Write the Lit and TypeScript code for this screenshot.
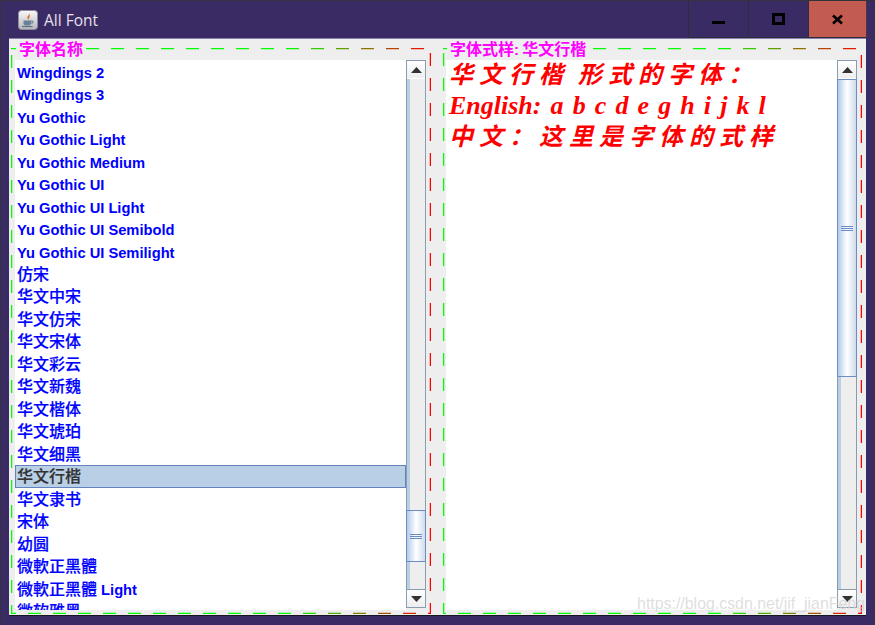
import { LitElement, html, css, svg } from "lit";
import { customElement } from "lit/decorators.js";

const FONTS = [
  "Wingdings 2", "Wingdings 3", "Yu Gothic", "Yu Gothic Light", "Yu Gothic Medium", "Yu Gothic UI",
  "Yu Gothic UI Light", "Yu Gothic UI Semibold", "Yu Gothic UI Semilight", "仿宋", "华文中宋", "华文仿宋",
  "华文宋体", "华文彩云", "华文新魏", "华文楷体", "华文琥珀", "华文细黑", "华文行楷", "华文隶书", "宋体", "幼圆",
  "微軟正黑體", "微軟正黑體 Light", "微软雅黑",
];
const SELECTED = "华文行楷";

function runs(text: string) {
  return text.split(/([\u3000-\u9fff\uff00-\uffef]+)/).filter(Boolean).map((part) =>
    /[\u3000-\u9fff\uff00-\uffef]/.test(part) ? html`<span class="cjk">${part}</span>` : html`<span class="lat">${part}</span>`
  );
}

function gradientColor(t: number) {
  const k = Math.max(0, (t - 0.66) / 0.34);
  return `rgb(${Math.round(255 * k)},${Math.round(255 * (1 - k))},0)`;
}

function starts(phase: number, end: number) {
  const out: number[] = [];
  for (let p = phase - 25; p < end; p += 25) out.push(p);
  return out;
}

interface Phases { top: number; right: number; bottom: number; left: number; }

function border(w: number, h: number, ph: Phases) {
  const parts = [];
  const rect = (x: number, y: number, rw: number, rh: number, fill: string, o = 1) =>
    svg`<rect x=${x} y=${y} width=${rw} height=${rh} fill=${fill} opacity=${o}></rect>`;
  for (const s of starts(ph.top, w)) {
    const a = Math.max(0, s), b = Math.min(w, s + 13);
    if (b <= a) continue;
    const c = gradientColor((a + b) / 2 / w);
    parts.push(rect(a, 0, b - a, 1, c), rect(a, 1, b - a, 1, c, 0.25));
  }
  for (const s of starts(ph.bottom, w)) {
    const a = Math.max(0, s), b = Math.min(w, s + 13);
    if (b <= a) continue;
    const c = gradientColor((a + b) / 2 / w);
    parts.push(rect(a, h - 1, b - a, 1, c), rect(a, h - 2, b - a, 1, c, 0.25));
  }
  for (const s of starts(ph.left, h)) {
    const a = Math.max(0, s), b = Math.min(h, s + 13);
    if (b <= a) continue;
    parts.push(rect(0, a, 1, b - a, "#00ff00"), rect(1, a, 1, b - a, "#00ff00", 0.25));
  }
  for (const s of starts(ph.right, h)) {
    const a = Math.max(0, s), b = Math.min(h, s + 13);
    if (b <= a) continue;
    parts.push(rect(w - 1, a, 1, b - a, "#ff0000"), rect(w - 2, a, 1, b - a, "#ff0000", 0.25));
  }
  return html`<svg class="dash" width=${w} height=${h} viewBox="0 0 ${w} ${h}" shape-rendering="crispEdges">${parts}</svg>`;
}

function scrollbar(before: number, thumb: number) {
  return html`<div class="sb">
    <div class="btn"><svg width="11" height="6" viewBox="0 0 11 6"><path d="M5.5 0L11 6H0Z" fill="#333"></path></svg></div>
    <div class="track">
      <div class="strip" style="height:${before}px"></div>
      <div class="thumb" style="height:${thumb}px"><i></i><i></i><i></i></div>
      <div class="strip rest"></div>
    </div>
    <div class="btn down"><svg width="11" height="6" viewBox="0 0 11 6"><path d="M0 0H11L5.5 6Z" fill="#333"></path></svg></div>
  </div>`;
}

@customElement("app-root")
export class AppRoot extends LitElement {
  static styles = css`
    :host { display: block; width: 875px; height: 625px; background: #3b2b65; box-sizing: border-box; border: 1px solid #35323f; border-bottom: 0; overflow: hidden; position: relative; }
    .title { display: flex; align-items: stretch; height: 37px; padding-right: 7px; }
    .name { flex: 1; display: flex; align-items: center; gap: 6px; padding-left: 17px; color: #e6e0ea; font: 15.5px "Open Sans", sans-serif; }
    .wb { width: 60px; flex: none; border-left: 1px solid #2f2d3c; border-bottom: 1px solid #2f2d3c; display: flex; align-items: center; justify-content: center; box-sizing: border-box; }
    .wb.close { width: 59px; background: #c25b50; border-right: 1px solid #4a3540; }
    .min-icon { margin-top: 6px; }
    .main { width: 857px; height: 578px; margin-left: 8px; box-sizing: border-box; background: #eeeeee; border-top: 1px solid #8782ad; border-bottom: 1px solid #17151f; padding: 9px 4px 2px 2px; display: flex; gap: 12px; }
    .panel { position: relative; height: 565px; box-sizing: border-box; display: flex; flex-direction: column; }
    .left { width: 420px; padding: 12px 5px 3px 4px; }
    .right { width: 419px; padding: 12px 5px 3px 3px; }
    .dash { position: absolute; left: 0; top: 0; }
    .legend { position: absolute; top: -9px; background: #eeeeee; height: 18px; padding: 0 3px; color: #ff00ff; font: bold 15px/18px "Liberation Sans", sans-serif; white-space: nowrap; }
    .legend .cjk { font: 700 16px/18px "Noto Sans CJK SC", sans-serif; }
    .left .legend { left: 5px; }
    .right .legend { left: 4px; word-spacing: -1px; }
    .body { flex: 1; display: flex; min-height: 0; position: relative; }
    .list { flex: 1; background: #fff; overflow: hidden; min-width: 0; }
    .row { height: 22.5px; box-sizing: border-box; padding: 0 2px; display: flex; align-items: center; color: #0000ff; white-space: pre; font: bold 14.7px "Liberation Sans", sans-serif; }
    .row .lat { margin-top: 3px; }
    .row .cjk { font: 500 16px/20px "Noto Sans CJK SC", sans-serif; margin-top: -2px; -webkit-text-stroke: 0.2px currentColor; }
    .row.sel { padding: 0 1px; color: #333; background: #b8cfe5; border: 1px solid #6382bf; }
    .sample { flex: 1; background: #fff; padding: 0 0 0 3px; color: #ff0000; min-width: 0; }
    .line { height: 31px; display: flex; align-items: center; white-space: pre; }
    .line .cjk { font: italic 700 24px/26px "Noto Sans CJK SC", sans-serif; letter-spacing: 6px; margin-top: -6px; }
    .line .lat { font: italic 700 26px/28px "Liberation Serif", serif; word-spacing: 2.6px; margin-top: -1px; }
    .sb { width: 20px; height: 548px; display: flex; flex-direction: column; flex: none; box-sizing: border-box; border-left: 1px solid #8a9cb0; border-right: 1px solid #8a9cb0; }
    .btn { height: 19px; flex: none; box-sizing: border-box; background: linear-gradient(#ffffff, #eeeeee); border-top: 1px solid #8a9cb0; border-bottom: 1px solid #ffffff; display: flex; align-items: center; justify-content: center; }
    .btn.down { border-top: 1px solid #8a9cb0; border-bottom: 1px solid #8a9cb0; }
    .track { flex: 1; display: flex; flex-direction: column; min-height: 0; }
    .strip { flex: none; background: linear-gradient(90deg, #b8cfe5 0, #b8cfe5 3px, #eeeeee 3px); }
    .strip.rest { flex: 1; }
    .thumb { flex: none; box-sizing: border-box; border: 1px solid #6d8cc6; background: linear-gradient(90deg, #b3cae8, #e8f0fa 35%, #ffffff 50%, #cfdcec); display: flex; flex-direction: column; align-items: center; justify-content: center; gap: 1px; margin: 0 -1px; }
    .thumb i { display: block; width: 12px; height: 1px; background: #6d8cc6; }
    .mark { position: absolute; right: 9px; bottom: 12px; color: rgba(195, 195, 195, 0.55); font: 15.9px "Liberation Sans", sans-serif; white-space: nowrap; text-shadow: 0 0 1px rgba(255, 255, 255, 0.5); }
  `;

  render() {
    return html`
      <div class="title">
        <div class="name">
          <svg width="20" height="20" viewBox="0 0 20 20">
            <defs><linearGradient id="ic" x1="0" y1="0" x2="0" y2="1"><stop offset="0" stop-color="#fafafa"></stop><stop offset="1" stop-color="#b5b5bd"></stop></linearGradient></defs>
            <rect x="0.5" y="0.5" width="19" height="19" rx="3" fill="url(#ic)" stroke="#8d8d9a"></rect>
            <path d="M10.5 2.5C12.5 5 8.5 6 9.5 8.5C10 9.5 11 9.5 11 9.5C10.2 8 13.5 6.5 10.5 2.5Z" fill="#d8702a"></path>
            <path d="M5.5 10.5H13V13.5C13 15 11.5 15.5 9.2 15.5C7 15.5 5.5 15 5.5 13.5Z" fill="#6d8196"></path>
            <path d="M13 11H15V13H13" fill="none" stroke="#6d8196"></path>
            <path d="M4 16.5H14.5" stroke="#5b6f85" stroke-width="1.2"></path>
          </svg>
          <span>All Font</span>
        </div>
        <div class="wb"><svg class="min-icon" width="13" height="3" viewBox="0 0 13 3"><rect width="13" height="3" fill="#000"></rect></svg></div>
        <div class="wb"><svg width="13" height="12" viewBox="0 0 13 12"><rect x="1.5" y="1.5" width="10" height="9" fill="none" stroke="#000" stroke-width="3"></rect></svg></div>
        <div class="wb close"><svg width="11" height="11" viewBox="0 0 11 11"><path d="M1 1.5L10 9.5M10 1.5L1 9.5" stroke="#000" stroke-width="2.6"></path></svg></div>
      </div>
      <div class="main">
        <div class="panel left">
          ${border(420, 566, { top: 0, right: 5, bottom: 17, left: 7 })}
          <div class="legend"><span class="cjk">字体名称</span></div>
          <div class="body">
            <div class="list">
              ${FONTS.map((f) => html`<div class="row ${f === SELECTED ? "sel" : ""}">${runs(f)}</div>`)}
            </div>
            ${scrollbar(431, 52)}
          </div>
        </div>
        <div class="panel right">
          ${border(419, 566, { top: 0, right: 7, bottom: 15, left: 5 })}
          <div class="legend"><span class="cjk">字体式样</span>: <span class="cjk">华文行楷</span></div>
          <div class="body">
            <div class="sample">
              <div class="line">${runs("华文行楷 形式的字体：")}</div>
              <div class="line">${runs("English: a b c d e g h i j k l")}</div>
              <div class="line">${runs("中文：这里是字体的式样")}</div>
            </div>
            ${scrollbar(0, 298)}
          </div>
        </div>
      </div>
      <div class="mark">https://blog.csdn.net/jif_jianFeng</div>
    `;
  }
}
